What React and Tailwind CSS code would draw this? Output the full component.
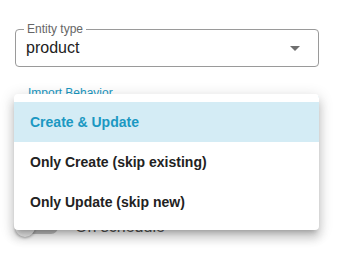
const options = [
  { label: 'Create & Update', selected: true },
  { label: 'Only Create (skip existing)' },
  { label: 'Only Update (skip new)' },
]

export default function App() {
  return (
    <div className="relative h-[255px] w-[345px] overflow-hidden bg-white font-['Liberation_Sans',Arial,sans-serif]">
      <div className="flex flex-col pl-[15px] pr-[26px] pt-[29px]">
        {/* entity type select */}
        <div className="relative flex h-[38px] items-center rounded-[4px] border border-[#9a9a9a] pl-[10px] pr-[18px]">
          <span className="absolute -top-[9px] left-[8px] bg-white px-[3px] text-[12px] leading-[16px] text-[#666]">
            Entity type
          </span>
          <span className="flex-1 text-[16px] leading-[20px] text-[#222]">product</span>
          <svg viewBox="0 0 10 5" className="h-[5px] w-[10px]">
            <path d="M0 0h10L5 5z" fill="#6f6f6f" />
          </svg>
        </div>

        {/* import behavior select (open, covered by the menu) */}
        <div className="relative mt-[28px] h-[38px] rounded-[4px] border-2 border-[#1b98c2]">
          <span className="absolute -top-[12px] left-[8px] bg-white px-[3px] text-[12px] leading-[16px] text-[#1b98c2]">
            Import Behavior
          </span>
        </div>

        {/* schedule switch */}
        <div className="mt-[82px] flex h-[24px] items-center gap-[17px]">
          <div className="relative h-[14px] w-[43px] rounded-full bg-[#c4c4c4]">
            <div className="absolute -top-[3px] left-0 h-[20px] w-[20px] rounded-full bg-[#f2f2f2] shadow-[0_1px_3px_rgba(0,0,0,0.35)]" />
          </div>
          <span className="text-[16px] text-[#555]">On schedule</span>
        </div>
      </div>

      {/* dropdown menu */}
      <div className="absolute left-[14px] top-[94px] w-[305px] rounded-[4px] bg-white py-[8px] shadow-[0px_5px_5px_-3px_rgba(0,0,0,0.2),0px_8px_10px_1px_rgba(0,0,0,0.14),0px_3px_14px_2px_rgba(0,0,0,0.12)]">
        {options.map((o) => (
          <div
            key={o.label}
            className={
              o.selected
                ? 'flex h-[40px] items-center bg-[#d4ecf5] pl-[16px] text-[14px] font-bold text-[#1b98c2]'
                : 'flex h-[40px] items-center pl-[16px] text-[14px] font-bold text-[#222]'
            }
          >
            {o.label}
          </div>
        ))}
      </div>
    </div>
  )
}
